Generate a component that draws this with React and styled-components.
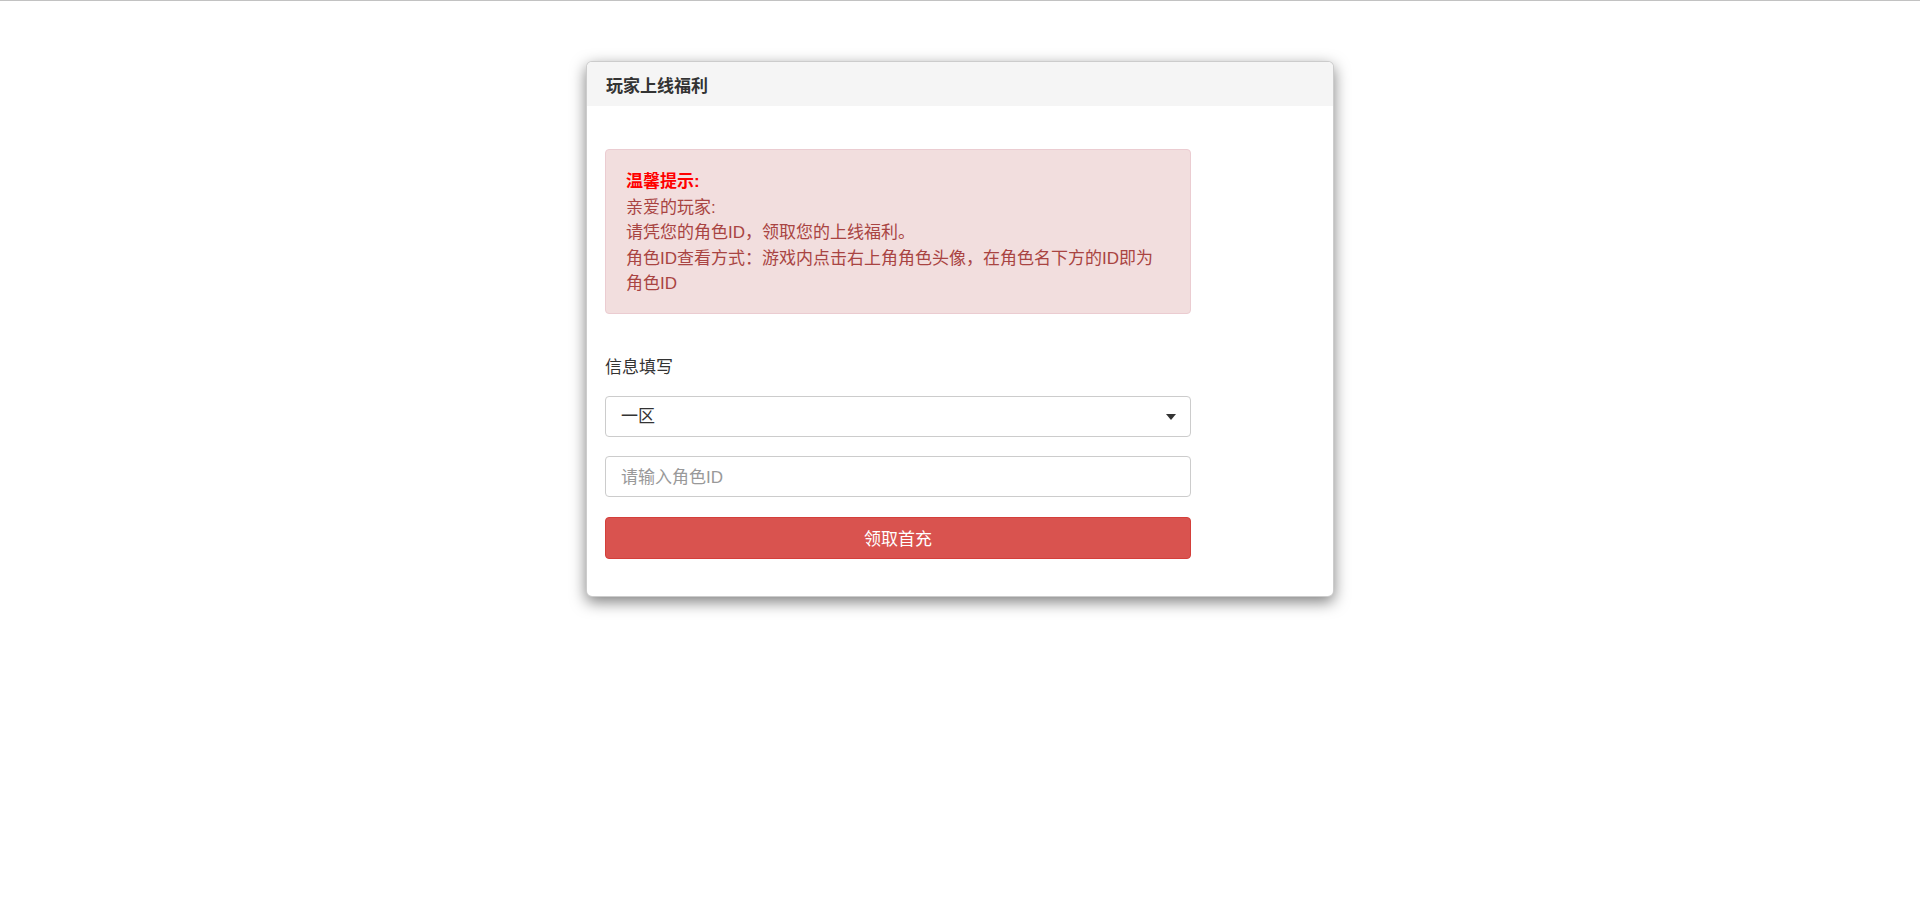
import React from "react";
import styled, { createGlobalStyle } from "styled-components";

const GlobalStyle = createGlobalStyle`
  html, body {
    margin: 0;
    padding: 0;
    background: #ffffff;
  }
  body {
    border-top: 1px solid #c2c2c2;
    font-family: "Liberation Sans", "Noto Sans CJK SC", sans-serif;
    font-size: 17px;
    color: #333333;
  }
  * { box-sizing: border-box; }
`;

const Page = styled.div`
  padding-top: 60px;
  min-height: 901px;
`;

const Card = styled.div`
  width: 748px;
  margin: 0 auto;
  background: #ffffff;
  border: 1px solid rgba(0, 0, 0, 0.2);
  border-radius: 6px;
  box-shadow: 0 5px 15px rgba(0, 0, 0, 0.5);
  overflow: hidden;
`;

const Header = styled.div`
  height: 44px;
  display: flex;
  align-items: center;
  padding: 1px 19px 0;
  background: #f5f5f5;
  font-size: 17px;
  font-weight: 700;
  color: #333333;
`;

const Body = styled.div`
  padding: 43px 19px 37px 18px;
`;

const Column = styled.div`
  width: 586px;
  display: flex;
  flex-direction: column;
`;

const Alert = styled.div`
  background: #f2dede;
  border: 1px solid #ebccd1;
  border-radius: 4px;
  color: #a94442;
  padding: 19px 30px 16px 20px;
  font-size: 17px;
  line-height: 25.5px;
  margin-bottom: 40px;
`;

const AlertTitle = styled.div`
  color: #ff0000;
  font-weight: 700;
`;

const Label = styled.div`
  font-size: 17px;
  line-height: 24px;
  padding-top: 2px;
  color: #333333;
  margin-bottom: 16px;
`;

const SelectWrap = styled.div`
  position: relative;
  margin-bottom: ${(p) => p.$gap}px;
`;

const Select = styled.select`
  appearance: none;
  -webkit-appearance: none;
  width: 100%;
  height: 41px;
  padding: 0 40px 0 15px;
  border: 1px solid #cccccc;
  border-radius: 4px;
  background: #ffffff;
  font-family: inherit;
  font-size: 17px;
  color: #333333;
  outline: none;
`;

const Caret = styled.span`
  position: absolute;
  right: 15px;
  top: 18px;
  width: 0;
  height: 0;
  border-top: 6px solid #333333;
  border-left: 5.5px solid transparent;
  border-right: 5.5px solid transparent;
  pointer-events: none;
`;

const Input = styled.input`
  width: 100%;
  height: 41px;
  padding: 3px 15px 0;
  border: 1px solid #cccccc;
  border-radius: 4px;
  font-family: inherit;
  font-size: 17px;
  color: #333333;
  outline: none;
  margin-bottom: ${(p) => p.$gap}px;
  &::placeholder {
    color: #999999;
  }
`;

const Button = styled.button`
  width: 100%;
  height: 42px;
  border: 1px solid #d43f3a;
  border-radius: 4px;
  background: #d9534f;
  color: #ffffff;
  font-family: inherit;
  font-size: 17px;
  cursor: pointer;
`;

export default function App() {
  return (
    <>
      <GlobalStyle />
      <Page>
        <Card>
          <Header>玩家上线福利</Header>
          <Body>
            <Column>
              <Alert>
                <AlertTitle>温馨提示:</AlertTitle>
                <div>亲爱的玩家:</div>
                <div>请凭您的角色ID，领取您的上线福利。</div>
                <div>角色ID查看方式：游戏内点击右上角角色头像，在角色名下方的ID即为角色ID</div>
              </Alert>
              <Label>信息填写</Label>
              <SelectWrap $gap={19}>
                <Select defaultValue="1">
                  <option value="1">一区</option>
                </Select>
                <Caret />
              </SelectWrap>
              <Input $gap={20} placeholder="请输入角色ID" />
              <Button>领取首充</Button>
            </Column>
          </Body>
        </Card>
      </Page>
    </>
  );
}
